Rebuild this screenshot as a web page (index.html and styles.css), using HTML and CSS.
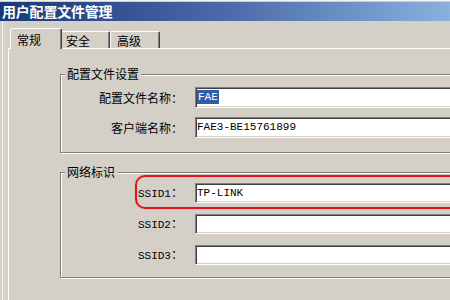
FILE: index.html
```html
<!DOCTYPE html>
<html lang="zh-CN">
<head>
    <meta charset="UTF-8">
    <title>用户配置文件管理</title>
    <link rel="stylesheet" href="styles.css">
</head>
<body>

    <div class="window">
        <!-- Title bar -->
        <div class="titlebar">用户配置文件管理</div>

        <div class="window-body">
            <!-- Tabs -->
            <div class="tabs">
                <div class="tab active">常规</div>
                <div class="tab tab-security">安全</div>
                <div class="tab tab-advanced">高级</div>
            </div>

            <div class="panel">
                <!-- Profile settings -->
                <fieldset class="group group-profile">
                    <legend>配置文件设置</legend>
                    <div class="rows">
                        <div class="row">
                            <label>配置文件名称：</label>
                            <div class="field"><span class="selected">FAE</span></div>
                        </div>
                        <div class="row">
                            <label>客户端名称：</label>
                            <div class="field">FAE3-BE15761899</div>
                        </div>
                    </div>
                </fieldset>

                <!-- Network names -->
                <fieldset class="group group-network">
                    <legend>网络标识</legend>
                    <div class="rows">
                        <div class="row marked">
                            <label><span class="ascii">SSID1</span>：</label>
                            <div class="field">TP-LINK</div>
                            <div class="marker"></div>
                        </div>
                        <div class="row">
                            <label><span class="ascii">SSID2</span>：</label>
                            <div class="field"></div>
                        </div>
                        <div class="row">
                            <label><span class="ascii">SSID3</span>：</label>
                            <div class="field"></div>
                        </div>
                    </div>
                </fieldset>
            </div>
        </div>
    </div>

</body>
</html>
```

FILE: styles.css
```css
body {
    margin: 0;
    background-color: #d4d0c8;
    font-family: "Noto Sans CJK SC", sans-serif;
    font-size: 12px;
    color: #000;
    overflow: hidden;
}

.window {
    width: 450px;
    height: 300px;
    box-sizing: border-box;
    border-top: 1px solid #f4f2ee;
    padding-top: 1px;
    overflow: hidden;
}

.titlebar {
    height: 19px;
    line-height: 19px;
    padding-left: 2px;
    background: linear-gradient(to right, #183877, #4a6aa8 50%, #8ab0de);
    color: white;
    font-weight: bold;
    font-size: 14px;
    letter-spacing: -0.2px;
}

.window-body {
    margin-left: 2px;
    border-left: 1px solid #f4f2ee;
    padding: 7px 0 0 5px;
    height: 300px;
}

/* Tabs */
.tabs {
    display: flex;
    align-items: flex-end;
    height: 20px;
    padding-left: 2px;
}

.tab {
    box-sizing: border-box;
    height: 17px;
    padding: 2px 0 0 6px;
    line-height: 14px;
    border-top: 1px solid #fff;
    border-left: 1px solid #fff;
    border-right: 1px solid #404040;
    border-radius: 2px 2px 0 0;
    box-shadow: inset -1px 0 0 #808080;
    background-color: #d4d0c8;
}

.tab.active {
    position: relative;
    z-index: 1;
    width: 52px;
    height: 21px;
    margin-bottom: -1px;
    padding-top: 4px;
}

.tab-security {
    width: 51px;
    margin-left: -3px;
}

.tab-advanced {
    width: 50px;
}

/* Panel */
.panel {
    width: 500px;
    height: 260px;
    border-top: 1px solid #fff;
    border-left: 1px solid #fff;
    padding-left: 51px;
}

.group {
    width: 420px;
    margin: 0;
    padding: 0;
    border: 1px solid #808080;
    box-shadow: 1px 1px 0 #fff, inset 1px 1px 0 #fff;
}

.group legend {
    margin-left: 4px;
    padding: 0 2px;
    line-height: 14px;
    background-color: #d4d0c8;
}

.group-profile {
    margin-top: 18px;
}

.group-profile .rows {
    padding: 6px 0 14px;
}

.group-network {
    margin-top: 12px;
}

.group-network .rows {
    padding: 4px 0 12px;
}

.rows {
    display: flex;
    flex-direction: column;
    gap: 9px;
}

.group-network .rows {
    gap: 11px;
}

.row {
    position: relative;
    display: flex;
    align-items: center;
}

.row label {
    width: 122px;
    margin-right: 12px;
    text-align: right;
    line-height: 14px;
}

.ascii {
    font-family: "Liberation Mono", monospace;
    font-size: 11px;
}

.field {
    box-sizing: border-box;
    width: 300px;
    height: 21px;
    padding-left: 1px;
    background-color: #fff;
    border-top: 1px solid #808080;
    border-left: 1px solid #808080;
    border-bottom: 1px solid #fff;
    border-right: 1px solid #fff;
    box-shadow: inset 1px 1px 0 #404040, inset -1px -1px 0 #d4d0c8;
    font-family: "Liberation Mono", monospace;
    font-size: 11px;
    line-height: 19px;
    white-space: pre;
}

.group-network .field {
    height: 20px;
    line-height: 18px;
}

.selected {
    padding: 1px 1px;
    background-color: #2f5cae;
    color: #fff;
}

/* Red annotation around SSID1 */
.marker {
    position: absolute;
    left: 74px;
    top: -8px;
    width: 340px;
    height: 30px;
    border: 2px solid #e3141c;
    border-radius: 10px;
    box-shadow: 0 0 1px #f29090, inset 0 0 1px #f29090;
}
```
